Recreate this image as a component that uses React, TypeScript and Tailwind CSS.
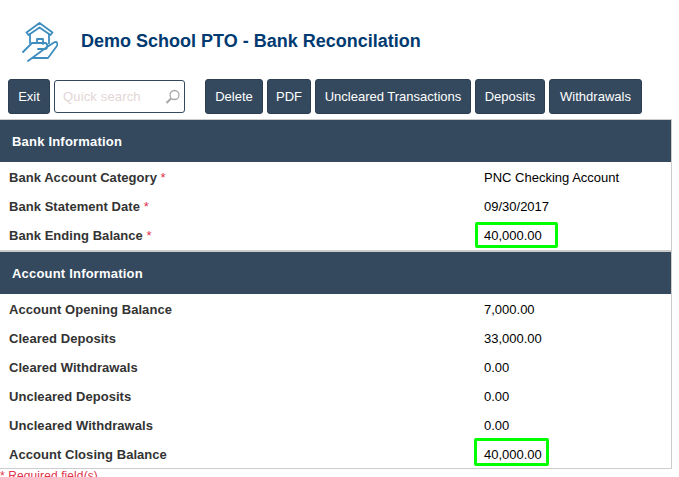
function Logo() {
  return (
    <svg width="36" height="40" viewBox="0 0 36 40" fill="none" stroke="#3d8dbf" strokeWidth="1.8" strokeLinejoin="round" strokeLinecap="round">
      {/* roof */}
      <path d="M4.500 10.500 L17.500 1 L30.500 10.500 L28.500 13 L17.500 5.500 L6.500 13 Z" />
      {/* walls */}
      <path d="M8 12.500 V21 M27 12.500 V21.500" />
      {/* door */}
      <path d="M15 21 V17 H21 V22" />
      {/* hand */}
      <path d="M1 30 L10 21 H23 C26 21 26 27 23 27 H16 M25 25 L32 20.500 C35 19 36.500 22 34.500 24.500 L26 36 H10 L6 39 Z" />
    </svg>
  )
}

function SearchIcon() {
  return (
    <svg width="16" height="16" viewBox="0 0 16 16" fill="none">
      <circle cx="9.500" cy="6" r="4.500" stroke="#a9a9a9" strokeWidth="1.300" />
      <path d="M6 9.500 L1.500 14" stroke="#a9a9a9" strokeWidth="2.200" />
    </svg>
  )
}

function ToolButton({ label, width }: { label: string; width: string }) {
  return (
    <button className={`${width} h-[35px] bg-[#34495e] border border-[#2c3e50] rounded-[3px] text-white text-[13px] text-center`}>
      {label}
    </button>
  )
}

function SectionHeader({ title }: { title: string }) {
  return (
    <div className="h-[42px] bg-[#34495e] flex items-center pl-3 pt-[1px] text-white font-bold text-[13px] tracking-[0.2px]">
      {title}
    </div>
  )
}

function Row({ label, value, required }: { label: string; value: string; required?: boolean }) {
  return (
    <div className="h-[29px] flex items-center">
      <div className="w-[484px] pl-[9px] font-bold text-[#333333] text-[13px] tracking-[0.05px]">
        {label}
        {required && <span className="text-[#e0334c] font-normal"> *</span>}
      </div>
      <div className="text-[13px] text-black">{value}</div>
    </div>
  )
}

function Highlight({ className }: { className: string }) {
  return <div className={`absolute border-[3px] border-[#00ff00] rounded-[2px] ${className}`} />
}

export default function App() {
  return (
    <div className="relative w-[679px] h-[477px] overflow-hidden bg-white font-['Liberation_Sans',Arial,sans-serif]">
      {/* Header */}
      <div className="h-[79px] flex items-center">
        <div className="ml-[22px] mt-[5px] w-[36px] mr-[23px]">
          <Logo />
        </div>
        <h1 className="text-[#003a70] font-bold text-[18px] mt-[3px]">
          Demo School PTO - Bank Reconcilation
        </h1>
      </div>

      {/* Toolbar */}
      <div className="h-[40px] flex items-start pl-[8px]">
        <ToolButton label="Exit" width="w-[42px]" />
        <div className="relative w-[131px] h-[33px] mt-[1px] ml-[4px] mr-[20px] border border-[#34495e] rounded-[3px] bg-white flex items-center pl-[8px]">
          <span className="text-[#e3d6d6] text-[13px] tracking-[0.15px]">Quick search</span>
          <div className="absolute right-[3px] top-[8px]">
            <SearchIcon />
          </div>
        </div>
        <div className="flex gap-[4px]">
          <ToolButton label="Delete" width="w-[58px]" />
          <ToolButton label="PDF" width="w-[44px]" />
          <ToolButton label="Uncleared Transactions" width="w-[156px]" />
          <ToolButton label="Deposits" width="w-[70px]" />
          <ToolButton label="Withdrawals" width="w-[93px]" />
        </div>
      </div>

      {/* Panel */}
      <div className="w-[672px] border-t border-r border-b border-[#cccccc] h-[350px] overflow-hidden">
        <SectionHeader title="Bank Information" />
        <div className="h-[1px]" />
        <Row label="Bank Account Category" value="PNC Checking Account" required />
        <Row label="Bank Statement Date" value="09/30/2017" required />
        <Row label="Bank Ending Balance" value="40,000.00" required />
        <div className="h-[2px] bg-[#cccccc]" />
        <SectionHeader title="Account Information" />
        <div className="h-[1px]" />
        <Row label="Account Opening Balance" value="7,000.00" />
        <Row label="Cleared Deposits" value="33,000.00" />
        <Row label="Cleared Withdrawals" value="0.00" />
        <Row label="Uncleared Deposits" value="0.00" />
        <Row label="Uncleared Withdrawals" value="0.00" />
        <Row label="Account Closing Balance" value="40,000.00" />
      </div>
      <div className="text-[#e0334c] text-[12px] tracking-[0.1px] leading-[14px]">* Required field(s)</div>

      {/* annotation boxes over the balances */}
      <Highlight className="left-[475px] top-[222px] w-[83px] h-[26px]" />
      <Highlight className="left-[474px] top-[438px] w-[75px] h-[28px]" />
    </div>
  )
}
